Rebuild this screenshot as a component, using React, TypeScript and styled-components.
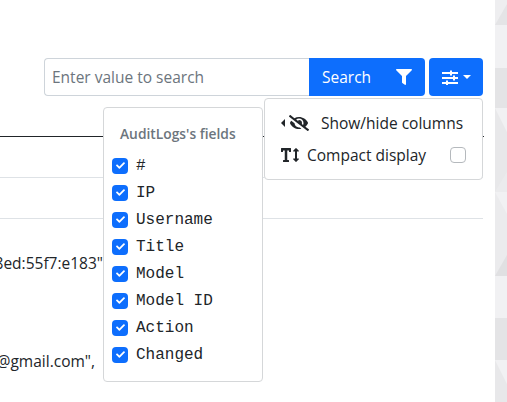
import React from "react";
import styled, { createGlobalStyle } from "styled-components";
import { FaFilter, FaEyeSlash, FaTextHeight, FaCheck } from "react-icons/fa";

const fields = ["#", "IP", "Username", "Title", "Model", "Model ID", "Action", "Changed"];

const GlobalStyle = createGlobalStyle`
  html, body {
    margin: 0;
    padding: 0;
    background: #fff;
  }
  body {
    font-family: "Open Sans", "Noto Sans", sans-serif;
    font-size: 15.5px;
    color: #212529;
  }
`;

const Page = styled.div`
  width: 507px;
  height: 402px;
  display: flex;
  overflow: hidden;
`;

const Content = styled.main`
  width: 495px;
  height: 402px;
  position: relative;
  overflow: hidden;
  padding-top: 58px;
  box-sizing: border-box;
`;

const Backdrop = styled.svg`
  width: 12px;
  height: 402px;
  display: block;
  flex-shrink: 0;
`;

const Toolbar = styled.div`
  display: flex;
  justify-content: flex-end;
  gap: 4px;
  padding-right: 12px;
`;

const SearchGroup = styled.div`
  display: flex;
  width: 381px;
  height: 38px;
  box-sizing: border-box;
`;

const SearchInput = styled.div`
  flex: 1;
  display: flex;
  align-items: center;
  padding-left: 7px;
  border: 1px solid #ced4da;
  border-right: 0;
  border-radius: 4px 0 0 4px;
  color: #6c757d;
`;

const SearchButton = styled.div`
  width: 116px;
  display: flex;
  align-items: center;
  justify-content: space-between;
  padding: 0 13px;
  box-sizing: border-box;
  background: #0d6efd;
  color: #fff;
  border-radius: 0 4px 4px 0;
`;

const ToggleButton = styled.div`
  width: 54px;
  height: 38px;
  display: flex;
  align-items: center;
  justify-content: center;
  gap: 5px;
  background: #0d6efd;
  color: #fff;
  border-radius: 4px;
`;

const Caret = styled.span`
  border-top: 4px solid #fff;
  border-left: 4px solid transparent;
  border-right: 4px solid transparent;
`;

const Table = styled.div`
  margin-top: 40px;
  height: 264px;
`;

const Rule = styled.div<{ $dark?: boolean; $gap: number }>`
  height: 1px;
  background: ${(p) => (p.$dark ? "#212529" : "#dee2e6")};
  margin-bottom: ${(p) => p.$gap}px;
  width: ${(p) => (p.$dark ? 484 : 483)}px;
`;

const Cell = styled.div<{ $gap: number; $width: number }>`
  line-height: 22px;
  margin-bottom: ${(p) => p.$gap}px;
  width: ${(p) => p.$width}px;
  white-space: nowrap;
  display: flex;
  justify-content: flex-end;
`;

const FieldsMenu = styled.div`
  position: absolute;
  left: 103px;
  top: 107px;
  width: 160px;
  height: 275px;
  box-sizing: border-box;
  background: #fff;
  border: 1px solid #d5d7d9;
  border-radius: 4px;
  padding: 16px 8px 0;
`;

const MenuHeader = styled.div`
  font-size: 13.8px;
  font-weight: 600;
  line-height: 20px;
  color: #6c757d;
  padding-left: 8px;
  margin-bottom: 8px;
`;

const FieldRow = styled.div`
  display: flex;
  align-items: center;
  height: 27px;
  gap: 8px;
  font-family: "Liberation Mono", monospace;
  font-size: 16px;
`;

const Check = styled.span`
  width: 16px;
  height: 16px;
  border-radius: 4px;
  background: #0d6efd;
  color: #fff;
  display: flex;
  align-items: center;
  justify-content: center;
  font-size: 9px;
`;

const OptionsMenu = styled.div`
  position: absolute;
  left: 264px;
  top: 98px;
  width: 219px;
  height: 82px;
  box-sizing: border-box;
  background: #fff;
  border: 1px solid #d5d7d9;
  border-radius: 4px;
  padding: 8px 16px 0;
`;

const OptionRow = styled.div`
  display: flex;
  align-items: center;
  height: 32px;
`;

const EyeArrow = styled.span`
  flex-shrink: 0;
  border-right: 4px solid #212529;
  border-top: 4px solid transparent;
  border-bottom: 4px solid transparent;
  margin-right: 4px;
`;

const OptionLabel = styled.span<{ $indent: number }>`
  margin-left: ${(p) => p.$indent}px;
`;

const EmptyBox = styled.span`
  width: 14px;
  height: 14px;
  margin-left: auto;
  margin-right: 0;
  border: 1px solid #b5b9bd;
  border-radius: 4px;
`;

const SlidersIcon = () => (
  <svg width="16" height="16" viewBox="0 0 16 16" fill="#fff">
    <rect x="0" y="3" width="16" height="2" />
    <rect x="0" y="8" width="16" height="2" />
    <rect x="0" y="13" width="16" height="2" />
    <rect x="8" y="1.5" width="2" height="5" />
    <rect x="11" y="6.5" width="2" height="5" />
    <rect x="4" y="11.5" width="2" height="4.5" />
  </svg>
);

export default function App() {
  return (
    <Page>
      <GlobalStyle />
      <Content>
        <Toolbar>
          <SearchGroup>
            <SearchInput>Enter value to search</SearchInput>
            <SearchButton>
              Search
              <FaFilter size={16} />
            </SearchButton>
          </SearchGroup>
          <ToggleButton>
            <SlidersIcon />
            <Caret />
          </ToggleButton>
        </Toolbar>
        <Table>
          <Rule $dark $gap={40} />
          <Rule $gap={40} />
          <Rule $gap={33} />
          <Cell $width={103} $gap={76}>8ed:55f7:e183"</Cell>
          <Cell $width={95} $gap={0}>@gmail.com",</Cell>
        </Table>
        <FieldsMenu>
          <MenuHeader>AuditLogs's fields</MenuHeader>
          {fields.map((f) => (
            <FieldRow key={f}>
              <Check>
                <FaCheck />
              </Check>
              {f}
            </FieldRow>
          ))}
        </FieldsMenu>
        <OptionsMenu>
          <OptionRow>
            <EyeArrow />
            <FaEyeSlash size={20} />
            <OptionLabel $indent={12}>Show/hide columns</OptionLabel>
          </OptionRow>
          <OptionRow>
            <FaTextHeight size={18} />
            <OptionLabel $indent={8}>Compact display</OptionLabel>
            <EmptyBox />
          </OptionRow>
        </OptionsMenu>
      </Content>
      <Backdrop viewBox="0 0 12 402">
        <rect width="12" height="402" fill="#ebebed" />
        <rect y="0" width="12" height="25" fill="#eeeef0" />
        <polygon points="0,25 12,25 12,4" fill="#e4e4e6" />
        <rect y="25" width="12" height="43" fill="#f1f1f3" />
        <rect y="68" width="12" height="40" fill="#e4e4e6" />
        <rect y="108" width="12" height="84" fill="#e8e8ea" />
        <polygon points="0,108 12,108 12,132" fill="#f1f1f3" />
        <polygon points="0,192 12,192 12,172" fill="#ebebed" />
        <rect y="192" width="12" height="42" fill="#ebebed" />
        <polygon points="0,192 12,192 12,214" fill="#f1f1f3" />
        <rect y="234" width="12" height="42" fill="#ebebed" />
        <polygon points="0,276 12,276 12,255" fill="#e0e0e2" />
        <rect y="276" width="12" height="42" fill="#f1f1f3" />
        <rect y="318" width="12" height="42" fill="#e4e4e6" />
        <rect y="360" width="12" height="42" fill="#e8e8ea" />
        <polygon points="0,360 12,360 12,384" fill="#f1f1f3" />
      </Backdrop>
    </Page>
  );
}
